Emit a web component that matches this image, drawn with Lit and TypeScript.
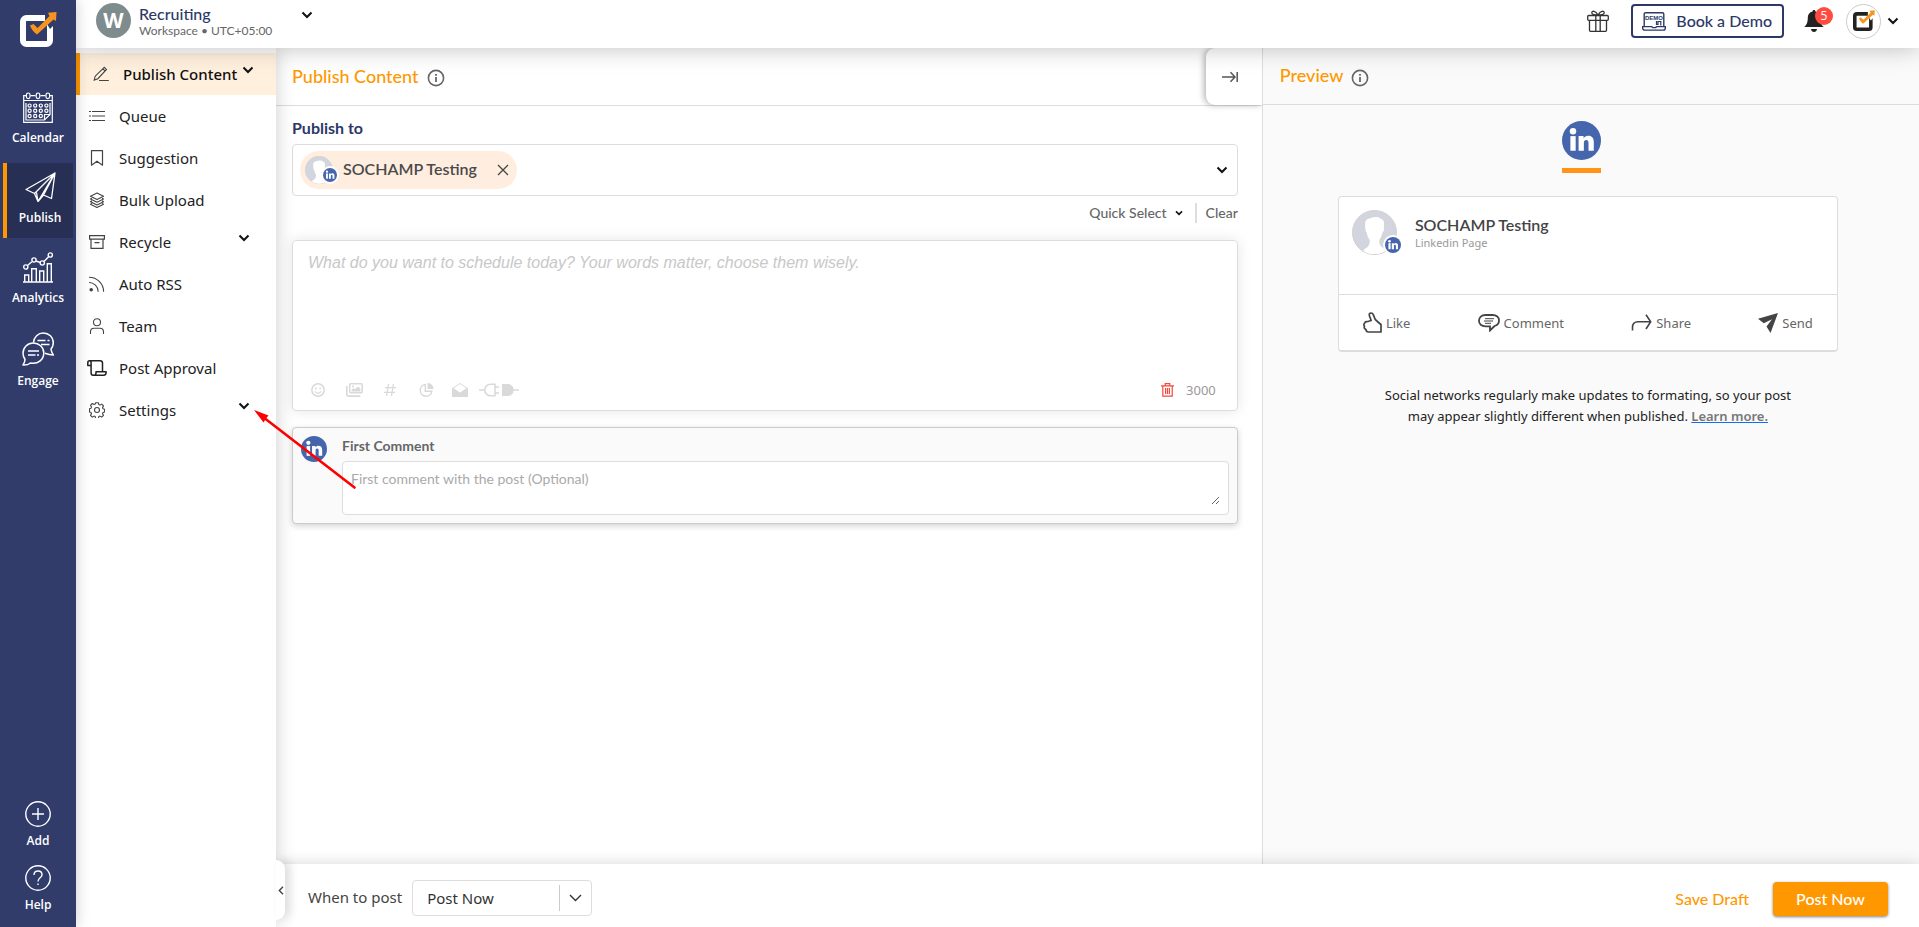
import { LitElement, html, svg, css, nothing, TemplateResult } from "lit";
import { customElement, property, state } from "lit/decorators.js";
import { classMap } from "lit/directives/class-map.js";

type Shape = { w: number; h: number; vb?: string; body: TemplateResult };

const icons: Record<string, Shape> = {
  logo: { w: 37, h: 36, vb: "0 0 37 36", body: svg`
    <rect x="3" y="6" width="27" height="26" rx="3.500" fill="none" stroke="#fff" stroke-width="6"/>
    <path d="M25 9V2h7l4 7-3 5-3 3z" fill="#313c6b"/>
    <path d="M10 13.500L13.500 12l4 4L29.500 4 28 .8 36.500 0 36 9 33.500 7.500 17 22.500C14 20.500 11 17 10 13.500z" fill="#f7941d"/>` },
  logoDark: { w: 22, h: 22, vb: "0 0 37 36", body: svg`
    <rect x="3" y="6" width="27" height="26" rx="3.500" fill="none" stroke="#222" stroke-width="6"/>
    <path d="M25 9V2h7l4 7-3 5-3 3z" fill="#fff"/>
    <path d="M10 13.500L13.500 12l4 4L29.500 4 28 .8 36.500 0 36 9 33.500 7.500 17 22.500C14 20.500 11 17 10 13.500z" fill="#f7941d"/>` },
  calendar: { w: 30, h: 31, vb: "0 0 30 31", body: svg`
    <g fill="none" stroke="currentColor" stroke-width="1.200">
      <path d="M3 3.600H.700v26.700h28.600V3.600H27M7.500 3.600h5M17.500 3.600h5M.700 8.500h28.600"/>
      <rect x="3.400" y="1" width="3.600" height="5.600" rx="1.800"/><rect x="13.200" y="1" width="3.600" height="5.600" rx="1.800"/><rect x="23" y="1" width="3.600" height="5.600" rx="1.800"/>
      <path d="M3 11v17h18.500l5.500-5.500V11M21.500 28v-5.500H27"/>
      ${[6.600, 12.200, 17.800, 23.400].map(x => svg`<circle cx=${x} cy="13.600" r="1.600"/><circle cx=${x} cy="18.800" r="1.600"/>`)}
      ${[6.600, 12.200, 17.800].map(x => svg`<circle cx=${x} cy="24" r="1.600"/>`)}
    </g>` },
  plane: { w: 31, h: 31, vb: "0 0 31 31", body: svg`
    <path d="M30 1 1 17.500l8.500 4L30 1zM30 1l-3.500 25.500-8-3.500L30 1zM9.500 21.500l3.500 8L30 1M13 29.500l5.500-6.500M11.500 20.500l1.500 9" fill="none" stroke="currentColor" stroke-width="1.300" stroke-linejoin="round"/>` },
  chart: { w: 30, h: 31, vb: "0 0 30 31", body: svg`
    <g fill="none" stroke="currentColor" stroke-width="1.400"><path d="M0 30h30M1.700 30v-7h4v7M8.700 30V16.700h4.600V30M16.700 30V19h4v11M24.300 30V11.700h4V30M4.500 13.500l4.300-3.800M13 9l4.200 1.500M21 9.500l4.800-5"/>
    <circle cx="2.800" cy="15" r="2.100"/><circle cx="11" cy="8" r="2.100"/><circle cx="19.300" cy="11" r="2.100"/><circle cx="27.300" cy="3" r="2.100"/></g>` },
  chat: { w: 32, h: 34, vb: "0 0 32 34", body: svg`
    <g fill="none" stroke="currentColor" stroke-width="1.500" stroke-linejoin="round"><path d="M11.500 10.500C12 5 16 1 21.300 1c5.600 0 10 4.300 10 9.700 0 2.500-1 4.800-2.300 6.300.2 2.300 1 4 2.300 6-3.500 0-6-.8-8.300-1.700"/>
    <path d="M11.300 11C5.500 11 1 15.500 1 21c0 2.500.8 4.800 2 6.300 0 2-.6 3.700-2 5.700 3.500.2 5.800-.7 7.500-2 8 1.500 13.300-4 13.300-10s-4.900-10-10.500-10z"/>
    <path d="M6 19h11M6 23h7.500M15 23h2M15.500 8.500h8M25.500 8.500h2M19 12.500h8.500"/></g>` },
  add: { w: 26, h: 26, vb: "0 0 26 26", body: svg`<g fill="none" stroke="currentColor" stroke-width="1.400"><circle cx="13" cy="13" r="12.200"/><path d="M13 7v12M7 13h12"/></g>` },
  help: { w: 26, h: 26, vb: "0 0 26 26", body: svg`<g fill="none" stroke="currentColor" stroke-width="1.400"><circle cx="13" cy="13" r="12.200"/><path d="M9 10c0-2.500 1.800-4 4-4s4 1.500 4 3.700c0 3-4 3.300-4 6.800M13 18.500V20"/></g>` },
  pencil: { w: 16, h: 16, body: svg`<path d="M11.300 1.300l2.200 2.200-8.600 9.200-3.700 1.400 1-3.900zM10 3l2.200 2.200M6 14.500h9.800" fill="none" stroke="currentColor" stroke-width="1.100"/>` },
  list: { w: 16, h: 16, body: svg`<path d="M3 3.500h13M3 8h13M3 12.500h13M0 3.500h2M0 8h2M0 12.500h2" stroke="currentColor" stroke-width="1.200"/>` },
  bookmark: { w: 16, h: 16, body: svg`<path d="M2.500.7h11v14.500L8 11.200l-5.500 4z" fill="none" stroke="currentColor" stroke-width="1.200" stroke-linejoin="round"/>` },
  layers: { w: 16, h: 16, body: svg`<g fill="none" stroke="currentColor" stroke-width="1.100" stroke-linejoin="round"><path d="M8 1l6.500 3.300L8 7.600 1.500 4.300z"/><path d="M3 6.200L1.500 7 8 10.300 14.500 7 13 6.200M3 8.800l-1.500.9L8 13l6.500-3.300-1.500-.9M3 11.500l-1.500.8L8 15.500l6.500-3.200-1.500-.8"/></g>` },
  archive: { w: 16, h: 16, body: svg`<path d="M.6 1.600h14.800v3.600H.600zM2 5.200v9.200h12V5.200M5.500 8.600h5" fill="none" stroke="currentColor" stroke-width="1.200"/>` },
  rss: { w: 16, h: 16, body: svg`<circle cx="2.200" cy="13.800" r="1.800" fill="currentColor"/><path d="M0 6.500c5 0 9.200 4 9.200 9.200M0 1.200c8 0 14.600 6.500 14.600 14.500" fill="none" stroke="currentColor" stroke-width="1.100"/>` },
  user: { w: 16, h: 16, body: svg`<g fill="none" stroke="currentColor" stroke-width="1.100"><circle cx="8" cy="4.200" r="3.500"/><path d="M1.500 16v-2.200c0-2 1.500-3.600 3.500-3.600h6c2 0 3.500 1.600 3.500 3.600V16"/></g>` },
  scroll: { w: 20, h: 16, vb: "0 0 20 16", body: svg`<path d="M3.800 5.400H.8V2.900C.8 1.700 1.600.8 2.500.8s1.600.9 1.600 2.100V13c0 1.300.9 2.200 2 2.200h10.600c1.400 0 2.400-1 2.400-2.600v-.8H9v1.100c0 1.300-.9 2.300-2.300 2.300M2.500.8h10.700c1.400 0 2.300.9 2.300 2.300v8.700" fill="none" stroke="#222" stroke-width="1.500" stroke-linejoin="round"/>` },
  gear: { w: 16, h: 16, body: svg`<g fill="none" stroke="currentColor" stroke-width="1.100" stroke-linejoin="round"><path d="M6.700.7h2.600l.5 1.900 1.200.5 1.700-1 1.800 1.800-1 1.700.5 1.200 1.600.5v1.900l-.1.700-1.500.5-.5 1.200 1 1.700-1.800 1.800-1.700-1-1.200.5-.5 1.900H6.700l-.5-1.900-1.200-.5-1.700 1-1.800-1.800 1-1.700-.5-1.200-1.500-.5V6.700l1.500-.5.500-1.200-1-1.700 1.800-1.800 1.700 1 1.200-.5z"/><circle cx="8" cy="8" r="2.500"/></g>` },
  down: { w: 12, h: 8, vb: "0 0 12 8", body: svg`<path d="M1.500 1.500L6 6l4.500-4.500" fill="none" stroke="#111" stroke-width="2"/>` },
  downSmall: { w: 8, h: 6, vb: "0 0 12 8", body: svg`<path d="M1.500 1.500L6 6l4.500-4.500" fill="none" stroke="#111" stroke-width="2.400"/>` },
  downThin: { w: 13, h: 8, vb: "0 0 13 8", body: svg`<path d="M1 1l5.500 5.500L12 1" fill="none" stroke="#333" stroke-width="1.400"/>` },
  left: { w: 6, h: 9, vb: "0 0 6 9", body: svg`<path d="M5 .8L1.300 4.500 5 8.200" fill="none" stroke="#444" stroke-width="1.400"/>` },
  info: { w: 18, h: 18, vb: "0 0 18 18", body: svg`<circle cx="9" cy="9" r="7.600" fill="none" stroke="#666" stroke-width="1.600"/><path d="M9 8v5M9 5v1.800" stroke="#666" stroke-width="1.800"/>` },
  toEnd: { w: 16, h: 12, vb: "0 0 16 12", body: svg`<path d="M0 6h13M8.500 1.200L13 6l-4.500 4.800M15.200 1v10" fill="none" stroke="#555" stroke-width="1.500"/>` },
  close: { w: 12, h: 12, vb: "0 0 12 12", body: svg`<path d="M1 1l10 10M11 1L1 11" stroke="#444" stroke-width="1.300"/>` },
  gift: { w: 22, h: 22, vb: "0 0 22 22", body: svg`<g fill="none" stroke="#333" stroke-width="1.300"><rect x=".7" y="5.500" width="20.600" height="4.800" rx="1"/><path d="M2.500 10.300v10c0 .6.400 1 1 1h15c.6 0 1-.4 1-1v-10M8.800 5.500v15.700M13.200 5.500v15.700M11 5C8.500 5 4.800 5 4.800 2.800S8.500.2 11 5zm0 0c2.500 0 6.200 0 6.200-2.200S13.500.2 11 5z"/></g>` },
  demo: { w: 24, h: 19, vb: "0 0 24 19", body: svg`<g fill="none" stroke="#2c3968" stroke-width="1.400"><path d="M2.200 14.500V2.200C2.200 1.200 2.800.7 3.600.7h16.800c.8 0 1.400.5 1.400 1.500v12.300"/><path d="M.7 14.600h9l1 1h3l1-1h8.600v1.300c0 1.300-.8 2.200-2 2.200H2.700c-1.200 0-2-.9-2-2.200z"/><path d="M14.500 9v3.500h1.500V9.500h2.800v4" stroke-width="1.200"/></g><text x="12" y="7.600" text-anchor="middle" font-family="Liberation Sans" font-size="6" font-weight="700" fill="#2c3968">DEMO</text>` },
  bell: { w: 20, h: 22, vb: "0 0 20 22", body: svg`<path d="M10 0c.9 0 1.400.6 1.400 1.400 3.200.7 4.800 3 4.800 6.100 0 5 1 7.200 3.600 9.600H.2c2.600-2.400 3.600-4.600 3.600-9.600 0-3.100 1.600-5.400 4.800-6.100C8.600.6 9.100 0 10 0zM7 19h6c-.2 1.700-1.400 3-3 3s-2.800-1.300-3-3z" fill="#222"/>` },
  smile: { w: 14, h: 14, vb: "0 0 14 14", body: svg`<circle cx="7" cy="7" r="6.200" fill="none" stroke="currentColor" stroke-width="1.500"/><circle cx="4.800" cy="5.500" r=".9" fill="currentColor"/><circle cx="9.200" cy="5.500" r=".9" fill="currentColor"/><path d="M4 8.300c.6 1.300 1.700 2 3 2s2.400-.7 3-2" fill="none" stroke="currentColor" stroke-width="1.200"/>` },
  images: { w: 17, h: 14, vb: "0 0 17 14", body: svg`<rect x="3.700" y=".8" width="12.500" height="9" rx="1" fill="none" stroke="currentColor" stroke-width="1.500"/><path d="M.8 3v8.600c0 .8.600 1.500 1.500 1.500h12" fill="none" stroke="currentColor" stroke-width="1.600"/><path d="M5.500 8.500V7l2-2 1.500 1.300L12 3.500l2.500 2.500v2.500z" fill="currentColor"/><circle cx="7" cy="3.500" r="1" fill="currentColor"/>` },
  hash: { w: 12, h: 14, vb: "0 0 12 14", body: svg`<path d="M4.500 1l-2 12M9.500 1l-2 12M1 4.700h11M0 9.300h11" stroke="currentColor" stroke-width="1.300"/>` },
  pie: { w: 15, h: 14, vb: "0 0 15 14", body: svg`<path d="M8.500 0c3.400 0 6 2.600 6 6h-6z" fill="currentColor"/><path d="M6.300 1.600a5.800 5.800 0 1 0 6.500 6.700H6.300z" fill="none" stroke="currentColor" stroke-width="1.500"/>` },
  mail: { w: 16, h: 14, vb: "0 0 16 14", body: svg`<path d="M0 5.300L8 0l8 5.300V14H0z" fill="currentColor"/><path d="M1.500 5.300L8 1l6.500 4.300L8 9.500z" fill="#fff"/>` },
  plug: { w: 40, h: 14, vb: "0 0 40 14", body: svg`<path d="M0 7h6.500M16 1.200h-4.500a5.800 5.800 0 0 0 0 11.600H16zM16 4h4M16 10h4" fill="none" stroke="currentColor" stroke-width="1.500"/><path d="M23 1h6c3 0 5.200 2.300 5.700 5.200H40v1.600h-5.300C34.200 10.700 32 13 29 13h-6z" fill="currentColor"/>` },
  trash: { w: 13, h: 14, vb: "0 0 13 14", body: svg`<path d="M0 2.800h13M4.200 2.500V.7h4.600v1.800M1.800 3v10.200h9.400V3M4.600 5v6M6.500 5v6M8.400 5v6" fill="none" stroke="#f4483c" stroke-width="1.200"/>` },
  like: { w: 19, h: 21, vb: "0 0 19 21", body: svg`<path d="M5.500 9.300L8.200 8.500 6.500 4C6 2 6.500 1 8 1c1.300 0 2 .7 2.400 1.900L12 7c1.200 1.800 3.500 3.500 6 5.500V20H5.500C3.500 20 3 19 3 17.500 1.300 16.800.8 15.500 1.500 14.300.5 13 .8 11.500 2 10.800c0-.9 1.300-1.500 3.500-1.500z" fill="none" stroke="#444" stroke-width="1.700" stroke-linejoin="round"/>` },
  comment: { w: 22, h: 18, vb: "0 0 22 18", body: svg`<path d="M7.500 1h7c4 0 6.500 2.300 6.500 5.500 0 2.800-1.800 4.800-4.500 5.500L12 16.500V12.300H7.500C3.500 12.300 1 10 1 6.700S3.500 1 7.500 1z" fill="none" stroke="#444" stroke-width="1.800"/><path d="M7 4.700h9M6 7h9M7 9.300h6" stroke="#444" stroke-width="1"/>` },
  share: { w: 21, h: 17, vb: "0 0 21 17", body: svg`<path d="M1.500 16.500v-3C1.500 9.500 4 7.800 7 7.800h12.500M15 .8l4.700 7L15 15" fill="none" stroke="#444" stroke-width="1.600"/>` },
  send: { w: 20, h: 20, vb: "0 0 20 20", body: svg`<path d="M20 0L0 5.800l5.800 4.400L14 6.300 8.500 13.500 12.500 20z" fill="#444"/>` },
};

const icon = (name: string) => {
  const s = icons[name];
  return html`<svg aria-hidden="true" width=${s.w} height=${s.h} viewBox=${s.vb ?? "0 0 16 16"}>${s.body}</svg>`;
};

const base = css`
  svg { display: block; flex: none; }
`;

@customElement("network-badge")
class NetworkBadge extends LitElement {
  @property({ type: Number }) size = 26;
  static styles = [base, css`:host { display: block; }`];
  render() {
    return html`<svg role="img" aria-label="LinkedIn" width=${this.size} height=${this.size} viewBox="0 0 40 40">
      <circle cx="20" cy="20" r="20" fill="#4566ad"/>
      <g fill="#fff"><circle cx="11.300" cy="10.500" r="3.300"/><rect x="8.600" y="15.500" width="5.400" height="15"/>
      <path d="M17 15.500h5.100v2.100c1-1.600 2.700-2.500 4.800-2.500 4 0 5.700 2.500 5.700 6.500v8.900h-5.400v-8c0-2-.7-3.100-2.300-3.100-1.700 0-2.500 1.200-2.500 3.100v8H17z"/></g></svg>`;
  }
}

@customElement("profile-avatar")
class ProfileAvatar extends LitElement {
  @property({ type: Number }) size = 28;
  @property({ type: Number }) badge = 14;
  static styles = [base, css`
    :host { display: block; position: relative; }
    .badge { position: absolute; right: -6px; bottom: 0; border: 2px solid #fff; border-radius: 50%; background: #fff; }
  `];
  render() {
    return html`<svg aria-hidden="true" width=${this.size} height=${this.size} viewBox="0 0 46 46">
      <defs><clipPath id="c"><circle cx="23" cy="23" r="22"/></clipPath></defs>
      <circle cx="23" cy="23" r="22.500" fill="#d2d5dd" stroke="#d0d0d0"/>
      <path clip-path="url(#c)" d="M13.500 15c-.5-5 3-6 5-6.500 4-2 9-1.500 11 .5 3 1 4 3.500 3 9.500.6 2-.3 4-1.600 5-.4 3.500-2 5.500-3 7 0 5 1 7 4.600 8.500V46h-20v-6c4-2 6-4 5.500-9.500-1.500-2-2.500-4-2.800-7-1.300-1.500-1.700-3.500-1.700-8.500z" fill="#fff"/>
      <ellipse clip-path="url(#c)" cx="23" cy="45" rx="15" ry="5.500" fill="#fff"/></svg>
      <div class="badge"><network-badge .size=${this.badge}></network-badge></div>`;
  }
}

@customElement("main-rail")
class MainRail extends LitElement {
  static styles = [base, css`
    :host { display: flex; flex-direction: column; background: #313c6b; color: #fff; padding: 12px 3px 13px; box-sizing: border-box; z-index: 3; box-shadow: 0 0 14px rgba(0,0,0,.2); font: 600 12px/18px "Open Sans", sans-serif; }
    .logo { display: flex; justify-content: center; padding-bottom: 35px; }
    nav { display: flex; flex-direction: column; gap: 5px; flex: 1; }
    a { color: inherit; text-decoration: none; display: flex; flex-direction: column; align-items: center; gap: 5px; }
    nav a { padding: 9px 0; gap: 6px; min-height: 75px; box-sizing: border-box; }
    .on { background: #272f55; border-left: 4px solid #ff9800; }
    .foot { display: flex; flex-direction: column; gap: 15px; }
  `];
  render() {
    const top = [["calendar", "Calendar"], ["plane", "Publish"], ["chart", "Analytics"], ["chat", "Engage"]];
    return html`<div class="logo">${icon("logo")}</div>
      <nav aria-label="Main">${top.map(([i, t]) => html`<a href="#" class=${classMap({ on: t === "Publish" })}>${icon(i)}<span>${t}</span></a>`)}</nav>
      <div class="foot"><a href="#">${icon("add")}<span>Add</span></a><a href="#">${icon("help")}<span>Help</span></a></div>`;
  }
}

@customElement("top-bar")
class TopBar extends LitElement {
  static styles = [base, css`
    :host { display: flex; align-items: flex-start; height: 48px; box-sizing: border-box; padding: 3px 20px 0; background: #fff; z-index: 2; box-shadow: 0 0 24px rgba(0,0,0,.25); font-family: Lato, sans-serif; }
    button { font: inherit; background: none; border: 0; padding: 0; cursor: pointer; color: inherit; display: flex; align-items: center; }
    .space { gap: 8px; text-align: left; }
    .initial { width: 35px; height: 35px; border-radius: 50%; background: #7f8c8d; color: #fff; display: grid; place-items: center; font: 700 21px/35px "Open Sans", sans-serif; }
    .names { display: flex; flex-direction: column; width: 154px; }
    .name { font-size: 16px; line-height: 20px; font-weight: 500; color: #2c3968; }
    .zone { font-size: 12px; line-height: 14px; color: #666; white-space: nowrap; }
    .drop { padding-bottom: 12px; }
    .right { margin-left: auto; display: flex; align-items: center; height: 36px; }
    .demo { border: 2px solid #2c3968; border-radius: 4px; height: 34px; color: #2c3968; font: 500 16px/20px Lato, sans-serif; padding: 0 10px 0 9px; gap: 10px; margin: 0 20px 0 22px; white-space: nowrap; }
    .bell { position: relative; margin-right: 22px; }
    .count { position: absolute; left: 11px; top: -3px; width: 18px; height: 18px; border-radius: 50%; background: #ff4b42; color: #fff; font: 12px/18px "Open Sans", sans-serif; text-align: center; }
    .me { gap: 6px; }
    .pic { width: 33px; height: 33px; border: 1px solid #ccc; border-radius: 50%; display: grid; place-items: center; }
  `];
  render() {
    return html`<button class="space"><span class="initial">W</span><span class="names"><span class="name">Recruiting</span><span class="zone">Workspace • UTC+05:00</span></span><span class="drop">${icon("down")}</span></button>
      <div class="right"><button aria-label="Rewards">${icon("gift")}</button>
      <button class="demo">${icon("demo")}Book a Demo</button>
      <button class="bell" aria-label="Notifications">${icon("bell")}<span class="count">5</span></button>
      <button class="me" aria-label="Account"><span class="pic">${icon("logoDark")}</span>${icon("down")}</button></div>`;
  }
}

@customElement("side-menu")
class SideMenu extends LitElement {
  static styles = [base, css`
    :host { display: flex; flex-direction: column; background: #fff; padding-top: 5px; box-sizing: border-box; position: relative; z-index: 1; box-shadow: 0 0 18px rgba(0,0,0,.2); font: 15px/22px "Noto Sans", sans-serif; }
    nav { display: flex; flex-direction: column; }
    a { display: flex; align-items: center; height: 42px; box-sizing: border-box; padding: 0 26px 1px 13px; color: #222; text-decoration: none; white-space: nowrap; }
    .glyph { width: 16px; margin-right: 14px; display: flex; justify-content: center; color: #444; }
    .chev { margin-left: auto; padding-bottom: 7px; }
    .on { background: #fff0de; border-left: 4px solid #ff9800; padding-right: 22px; color: #111; font-weight: 500; }
    .fold { position: absolute; left: 100%; bottom: 7px; width: 9px; height: 60px; border: 0; padding: 0; border-radius: 0 9px 9px 0; background: #fff; box-shadow: 5px 0 10px rgba(0,0,0,.12); display: grid; place-items: center; cursor: pointer; }
  `];
  render() {
    const rows: [string, string, boolean?][] = [["pencil", "Publish Content", true], ["list", "Queue"], ["bookmark", "Suggestion"], ["layers", "Bulk Upload"], ["archive", "Recycle", true], ["rss", "Auto RSS"], ["user", "Team"], ["scroll", "Post Approval"], ["gear", "Settings", true]];
    return html`<nav aria-label="Publish">${rows.map(([i, t, more], n) => html`<a href="#" class=${classMap({ on: n === 0 })}><span class="glyph">${icon(i)}</span>${t}${more ? html`<span class="chev">${icon("down")}</span>` : nothing}</a>`)}</nav>
      <button class="fold" aria-label="Collapse menu">${icon("left")}</button>`;
  }
}

@customElement("post-editor")
class PostEditor extends LitElement {
  @state() private text = "";
  static styles = [base, css`
    :host { display: flex; flex-direction: column; background: #fff; font: 14px/20px Lato, sans-serif; color: #666; min-width: 0; }
    button { font: inherit; background: none; border: 0; padding: 0; cursor: pointer; color: inherit; display: flex; align-items: center; justify-content: center; }
    header { display: flex; height: 57px; border-bottom: 1px solid #ddd; padding-left: 16px; align-items: center; gap: 8px; }
    h1 { margin: 0; padding-bottom: 2px; font: 500 18px/24px Lato, sans-serif; color: #ff9800; }
    .tip { padding-top: 3px; }
    .hide { margin-left: auto; width: 56px; height: 57px; padding-right: 8px; border-radius: 9px 0 0 9px; background: #fff; box-shadow: -2px 0 6px rgba(0,0,0,.3); }
    .body { padding: 12px 24px 24px 16px; display: flex; flex-direction: column; }
    h2 { margin: 0 0 6px; font: 700 16px/20px Lato, sans-serif; color: #2c3968; }
    .picker { border: 1px solid #ddd; border-radius: 4px; height: 52px; box-sizing: border-box; display: flex; align-items: center; justify-content: space-between; padding: 0 9px 0 7px; }
    .chip { display: flex; align-items: center; height: 38px; border-radius: 19px; background: #ffeedf; padding: 0 8px 0 5px; color: #4a4a4a; font: 600 16px/20px Lato, sans-serif; }
    .chip span { margin: 0 20px 0 10px; padding-bottom: 2px; }
    .quick { display: flex; justify-content: flex-end; align-items: center; margin: 7px 0 17px; font-weight: 500; }
    .quick button { gap: 8px; }
    .quick .clear { border-left: 2px solid #ddd; padding-left: 9px; margin-left: 12px; }
    .compose { border: 1px solid #ddd; border-radius: 4px; box-shadow: 0 0 14px rgba(0,0,0,.1); display: flex; flex-direction: column; height: 171px; box-sizing: border-box; padding: 12px 21px 10px 15px; }
    textarea { border: 0; outline: 0; padding: 0; background: none; resize: none; flex: 1; min-width: 0; color: #333; }
    .post { font: 16px/20px "Liberation Sans", sans-serif; }
    .post::placeholder { color: #c8c8c8; font-style: italic; }
    .tools { display: flex; align-items: center; gap: 14px; color: #d9d9d9; }
    .set { display: flex; gap: 16px; }
    .set.near { gap: 9px; }
    .set button { min-width: 20px; height: 20px; }
    .count { margin-left: auto; display: flex; align-items: center; gap: 12px; color: #999; font: 13px/20px "Noto Sans", sans-serif; }
    .first { margin-top: 16px; border: 1px solid #ccc; border-radius: 4px; background: #fafafa; box-shadow: 0 2px 6px rgba(0,0,0,.18); display: flex; gap: 15px; padding: 8px; }
    .field { display: flex; flex-direction: column; flex: 1; gap: 5px; }
    label { font-weight: 700; }
    .box { border: 1px solid #ddd; border-radius: 4px; background: #fff; display: flex; padding: 7px 8px 9px; height: 36px; }
    .note { font: 14px/20px Lato, sans-serif; resize: vertical; }
    .note::placeholder { color: #aaa; }
  `];
  render() {
    return html`<header><h1>Publish Content</h1><span class="tip">${icon("info")}</span><button class="hide" aria-label="Hide preview">${icon("toEnd")}</button></header>
      <div class="body"><h2>Publish to</h2>
        <div class="picker"><div class="chip"><profile-avatar .size=${28} .badge=${14}></profile-avatar><span>SOCHAMP Testing</span><button aria-label="Remove SOCHAMP Testing">${icon("close")}</button></div><button aria-label="Choose profiles">${icon("down")}</button></div>
        <div class="quick"><button>Quick Select ${icon("downSmall")}</button><button class="clear">Clear</button></div>
        <div class="compose"><textarea class="post" aria-label="Post text" placeholder="What do you want to schedule today? Your words matter, choose them wisely." .value=${this.text} @input=${(e: Event) => (this.text = (e.target as HTMLTextAreaElement).value)}></textarea>
          <div class="tools"><div class="set">${["smile", "images", "hash", "pie"].map(i => html`<button aria-label=${i}>${icon(i)}</button>`)}</div><div class="set near">${["mail", "plug"].map(i => html`<button aria-label=${i}>${icon(i)}</button>`)}</div>
          <div class="count"><button aria-label="Delete">${icon("trash")}</button>${3000 - this.text.length}</div></div></div>
        <div class="first"><network-badge .size=${26}></network-badge><div class="field"><label for="note">First Comment</label><div class="box"><textarea id="note" class="note" placeholder="First comment with the post (Optional)"></textarea></div></div></div>
      </div>`;
  }
}

@customElement("post-preview")
class PostPreview extends LitElement {
  static styles = [base, css`
    :host { display: flex; flex-direction: column; background: #fafafa; border-left: 1px solid #ddd; font: 13px/20px "Noto Sans", sans-serif; color: #666; min-width: 0; }
    header { display: flex; height: 56px; border-bottom: 1px solid #ddd; padding-left: 17px; align-items: center; gap: 8px; }
    h2 { margin: 0; padding-bottom: 2px; font: 500 18px/24px Lato, sans-serif; color: #ff9800; }
    .tip { padding-top: 3px; }
    .body { display: flex; flex-direction: column; align-items: center; padding: 16px 26px 16px 20px; }
    .tab { background: none; border: 0; border-bottom: 5px solid #ff9417; padding: 0 0 8px; margin-right: 12px; cursor: pointer; }
    .card { margin-top: 23px; width: 100%; max-width: 500px; box-sizing: border-box; background: #fff; border: 1px solid #ddd; border-bottom-width: 2px; border-radius: 4px; }
    .who { display: flex; gap: 18px; padding: 13px 13px 39px; }
    .name { font: 600 16px/20px Lato, sans-serif; color: #444; padding-top: 5px; }
    .kind { font-size: 11px; line-height: 16px; color: #999; }
    .acts { border-top: 1px solid #ddd; display: flex; justify-content: space-between; padding: 0 24px; height: 55px; }
    .acts button { display: flex; align-items: center; gap: 4px; border: 0; background: none; padding: 0; font: inherit; color: inherit; cursor: pointer; }
    p { margin: 33px 0 0; text-align: center; color: #222; line-height: 21px; max-width: 430px; }
    a { color: #777; font-weight: 600; text-decoration-color: #0d6efd; }
  `];
  render() {
    const acts = [["like", "Like"], ["comment", "Comment"], ["share", "Share"], ["send", "Send"]];
    return html`<header><h2>Preview</h2><span class="tip">${icon("info")}</span></header><div class="body">
      <button class="tab" aria-label="LinkedIn preview"><network-badge .size=${39}></network-badge></button>
      <article class="card"><div class="who"><profile-avatar .size=${45} .badge=${16}></profile-avatar><div><div class="name">SOCHAMP Testing</div><div class="kind">Linkedin Page</div></div></div>
      <div class="acts">${acts.map(([i, t]) => html`<button>${icon(i)}${t}</button>`)}</div></article>
      <p>Social networks regularly make updates to formating, so your post may appear slightly different when published. <a href="#">Learn more.</a></p></div>`;
  }
}

@customElement("publish-footer")
class PublishFooter extends LitElement {
  static styles = [base, css`
    :host { display: flex; align-items: center; height: 63px; background: #fff; box-sizing: border-box; padding: 6px 31px 0 32px; box-shadow: 0 0 14px rgba(0,0,0,.16); position: relative; font: 15px/20px "Noto Sans", sans-serif; color: #444; }
    label { margin-right: 10px; padding-bottom: 4px; }
    .pick { display: grid; width: 180px; padding-bottom: 2px; }
    select { grid-area: 1 / 1; appearance: none; height: 36px; border: 1px solid #ddd; border-radius: 4px; background: #fff; padding: 0 40px 0 14px; font: 15px/20px "Noto Sans", sans-serif; color: #333; }
    .arrow { grid-area: 1 / 1; justify-self: end; align-self: center; border-left: 1px solid #ccc; height: 26px; padding: 0 10px 0 9px; display: flex; align-items: center; pointer-events: none; }
    .end { margin-left: auto; display: flex; align-items: center; gap: 24px; }
    button { border: 0; background: none; padding: 0; font: 500 16px/20px Lato, sans-serif; color: #ff9800; cursor: pointer; }
    .go { width: 115px; height: 34px; border-radius: 4px; background: #ff9800; color: #fff; box-shadow: 0 1px 3px rgba(0,0,0,.5); }
  `];
  render() {
    return html`<label for="when">When to post</label><div class="pick"><select id="when"><option>Post Now</option><option>Schedule</option></select><span class="arrow">${icon("downThin")}</span></div>
      <div class="end"><button>Save Draft</button><button class="go">Post Now</button></div>`;
  }
}

@customElement("app-root")
class AppRoot extends LitElement {
  static styles = [base, css`
    :host { display: grid; grid-template-columns: 76px minmax(0, 1fr); grid-template-rows: minmax(0, 1fr); height: 100vh; position: relative; overflow: hidden; }
    .right { display: grid; grid-template-rows: auto minmax(0, 1fr); min-height: 0; }
    .work { display: grid; grid-template-columns: 200px minmax(0, 1fr); min-height: 0; }
    .main { display: grid; grid-template-rows: minmax(0, 1fr) auto; min-height: 0; }
    .panels { display: grid; grid-template-columns: 3fr 2fr; min-height: 0; }
    .pointer { position: absolute; left: 254px; top: 410px; z-index: 5; pointer-events: none; }
  `];
  render() {
    return html`<main-rail></main-rail><div class="right"><top-bar></top-bar><div class="work"><side-menu></side-menu>
      <div class="main"><div class="panels"><post-editor></post-editor><post-preview></post-preview></div><publish-footer></publish-footer></div></div></div>
      <svg class="pointer" aria-hidden="true" width="104" height="80" viewBox="0 0 104 80"><path d="M9 7l91.500 70.500" stroke="#f00" stroke-width="2.600" stroke-linecap="round"/><path d="M0 0l14.500 5.500-2.500 3-2.500 4z" fill="#f00"/></svg>`;
  }
}
